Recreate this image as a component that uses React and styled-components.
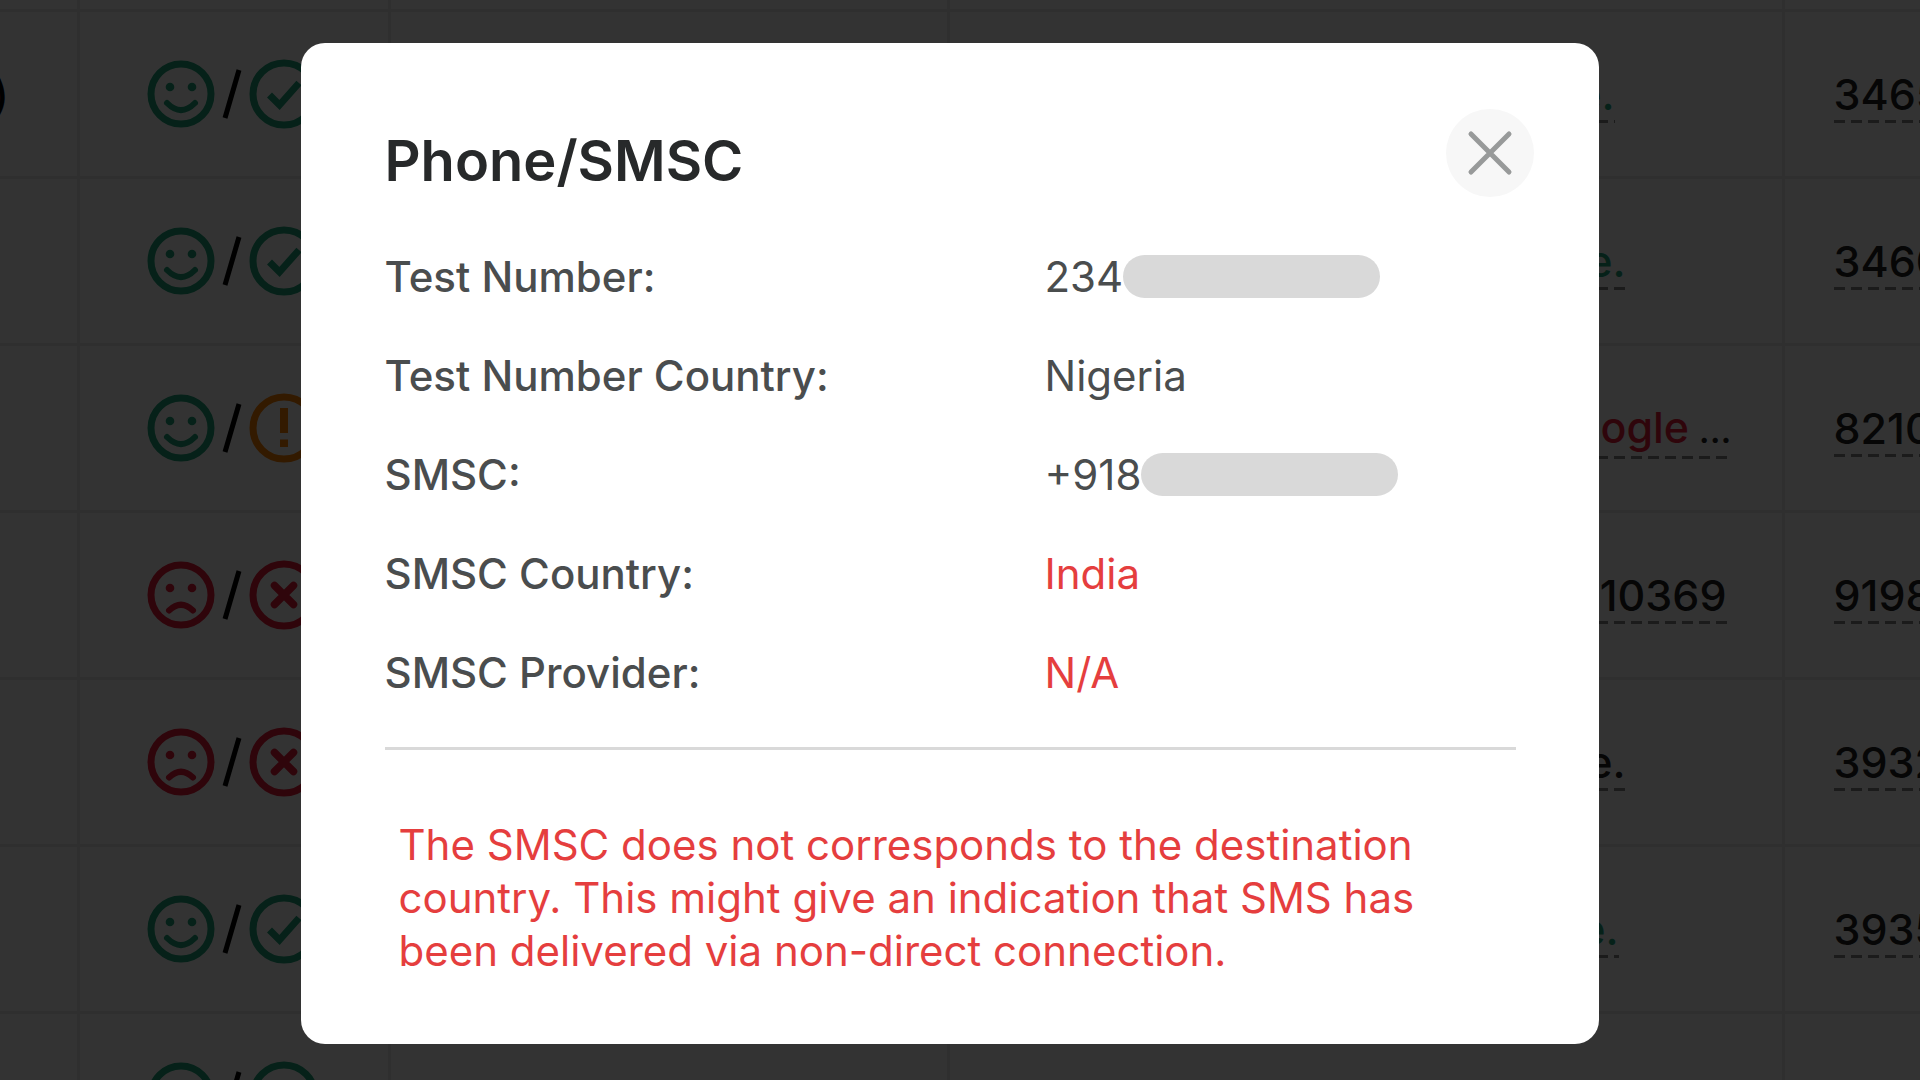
import React from "react";
import styled, { createGlobalStyle } from "styled-components";

const GlobalStyle = createGlobalStyle`
  * { box-sizing: border-box; }
  body {
    margin: 0;
    overflow: hidden;
    background: #fff;
    font-family: Inter, "Liberation Sans", sans-serif;
  }
`;

const Page = styled.main`
  height: 100vh;
  overflow: hidden;
`;

const Table = styled.table`
  width: 110%;
  table-layout: fixed;
  border-collapse: collapse;
  font-size: 43px;
  font-weight: 500;
  color: #222;
`;

const Column = styled.col`
  width: ${(p) => p.$width || "auto"};
`;

const HeadRow = styled.tr`
  height: 10px;
`;

const Row = styled.tr`
  height: 167px;
`;

const Cell = styled.td`
  padding: 0 0 0 ${(p) => p.$indent || 0}px;
  border: 3px solid #e9e9e9;
  border-width: 0 3px 3px 0;
  white-space: nowrap;
`;

const Status = styled.div`
  display: flex;
  align-items: center;
  gap: 7px;
`;

const Tail = styled.div`
  margin-left: -7px;
  line-height: 46px;
  color: #000;
`;

const Note = styled.a`
  display: block;
  width: ${(p) => p.$width || "100%"};
  margin-top: 7px;
  padding-bottom: 6px;
  line-height: 46px;
  text-align: ${(p) => (p.$width ? "right" : "left")};
  text-decoration: none;
  color: ${(p) => p.$color || "#222"};
  background: repeating-linear-gradient(to right, #888 0 11px, transparent 11px 17px) left
    bottom / 100% 3px no-repeat;
`;

const Rest = styled.span`
  font-size: 36px;
  color: #222;
`;

const Overlay = styled.div`
  position: fixed;
  inset: 0;
  display: flex;
  justify-content: center;
  align-items: flex-start;
  padding: 43px 21px 0 0;
  background: rgba(0, 0, 0, 0.8);
`;

const Dialog = styled.section`
  width: 100%;
  max-width: 1298px;
  padding: 66px 65px 67px 84px;
  border-radius: 24px;
  background: #fff;
  color: #4a4d4e;
`;

const Header = styled.header`
  display: flex;
  justify-content: space-between;
  align-items: center;
`;

const Title = styled.h1`
  margin: 0;
  padding-top: 16px;
  font-size: 56px;
  font-weight: 600;
  line-height: 72px;
  color: #27292a;
`;

const CloseButton = styled.button`
  display: grid;
  place-items: center;
  width: 88px;
  height: 88px;
  padding: 0;
  border: 0;
  border-radius: 50%;
  background: #f7f7f7;
  color: #989a9a;
`;

const Details = styled.dl`
  margin: 30px 18px 0 0;
  padding-bottom: 25px;
  border-bottom: 3px solid #d9d9d9;
  font-size: 42px;
`;

const Detail = styled.div`
  display: grid;
  grid-template-columns: 660px 1fr;
  align-items: center;
  height: 99px;
`;

const Term = styled.dt`
  font-weight: 500;
`;

const Value = styled.dd`
  display: flex;
  align-items: center;
  margin: 0;
  color: ${(p) => (p.$alert ? "#e53e3e" : "inherit")};
`;

const Redacted = styled.span`
  width: 257px;
  height: 43px;
  border-radius: 22px;
  background: #d9d9d9;
`;

const Warning = styled.p`
  margin: 68px 18px 0 0;
  padding: 0 90px 0 14px;
  font-size: 42px;
  line-height: 53px;
  color: #e53e3e;
`;

const GREEN = "#1fa67c";
const RED = "#e81c38";
const ORANGE = "#ff8000";

function Face({ sad }) {
  const color = sad ? RED : GREEN;
  return (
    <svg width="68" height="68" viewBox="0 0 68 68" fill="none" stroke={color}>
      <circle cx="34" cy="34" r="30" strokeWidth="7" />
      <circle cx="23" cy="27" r="4.3" fill={color} stroke="none" />
      <circle cx="45" cy="27" r="4.3" fill={color} stroke="none" />
      {sad ? (
        <path d="M22 49.5Q34 38 46 49.5" strokeWidth="6" strokeLinecap="round" />
      ) : (
        <path d="M20 43Q34 57 48 43" strokeWidth="6" strokeLinecap="round" />
      )}
    </svg>
  );
}

function Badge({ kind }) {
  const color = { ok: GREEN, warn: ORANGE, fail: RED }[kind];
  return (
    <svg width="70" height="70" viewBox="0 0 70 70" fill="none" stroke={color} strokeWidth="7">
      <circle cx="35" cy="35" r="31" />
      {kind === "ok" && <path d="M20.5 36L30.5 46L50 24" strokeWidth="7" />}
      {kind === "warn" && <path d="M35 15V40M35 46.5V54" strokeWidth="8" />}
      {kind === "fail" && (
        <path d="M25.5 25.5L44.5 44.5M44.5 25.5L25.5 44.5" strokeWidth="7.5" strokeLinecap="round" />
      )}
    </svg>
  );
}

function Slash() {
  return (
    <svg width="20" height="52" viewBox="0 0 20 52" stroke="#000" strokeWidth="5">
      <path d="M17 2L3 50" />
    </svg>
  );
}

const rows = [
  { tail: ")", badge: "ok", note: "e.", color: GREEN, width: "613px", id: "3465" },
  { badge: "ok", note: "e.", color: GREEN, width: "624px", id: "3460" },
  { badge: "warn", note: "ogle", rest: " ...", color: RED, width: "730px", id: "8210" },
  { sad: true, badge: "fail", note: "10369", width: "725px", id: "9198" },
  { sad: true, badge: "fail", note: "e.", width: "624px", id: "3932" },
  { badge: "ok", note: "e.", color: GREEN, width: "617px", id: "3935" },
  { badge: "ok" },
];

const details = [
  { term: "Test Number:", value: "234", redacted: true },
  { term: "Test Number Country:", value: "Nigeria" },
  { term: "SMSC:", value: "+918", redacted: true },
  { term: "SMSC Country:", value: "India", alert: true },
  { term: "SMSC Provider:", value: "N/A", alert: true },
];

export default function App() {
  return (
    <>
      <GlobalStyle />
      <Page>
        <Table>
          <colgroup>
            <Column $width="78px" />
            <Column $width="311px" />
            <Column $width="559px" />
            <Column $width="835px" />
            <Column />
          </colgroup>
          <tbody>
            <HeadRow>
              <Cell />
              <Cell />
              <Cell />
              <Cell />
              <Cell />
            </HeadRow>
            {rows.map((r, i) => (
              <Row key={i}>
                <Cell>{r.tail && <Tail>{r.tail}</Tail>}</Cell>
                <Cell $indent={67}>
                  <Status>
                    <Face sad={r.sad} />
                    <Slash />
                    <Badge kind={r.badge} />
                  </Status>
                </Cell>
                <Cell />
                <Cell $indent={52}>
                  {r.note && (
                    <Note href="#" $color={r.color} $width={r.width}>
                      {r.note}
                      {r.rest && <Rest>{r.rest}</Rest>}
                    </Note>
                  )}
                </Cell>
                <Cell $indent={49}>{r.id && <Note href="#">{r.id}</Note>}</Cell>
              </Row>
            ))}
          </tbody>
        </Table>
      </Page>
      <Overlay>
        <Dialog role="dialog" aria-modal="true" aria-labelledby="dialog-title">
          <Header>
            <Title id="dialog-title">Phone/SMSC</Title>
            <CloseButton type="button" aria-label="Close">
              <svg
                width="48"
                height="48"
                viewBox="0 0 48 48"
                stroke="currentColor"
                strokeWidth="5"
                strokeLinecap="round"
              >
                <path d="M5 5L43 43M43 5L5 43" />
              </svg>
            </CloseButton>
          </Header>
          <Details>
            {details.map((d) => (
              <Detail key={d.term}>
                <Term>{d.term}</Term>
                <Value $alert={d.alert}>
                  {d.value}
                  {d.redacted && <Redacted />}
                </Value>
              </Detail>
            ))}
          </Details>
          <Warning>
            The SMSC does not corresponds to the destination country. This might give an indication
            that SMS has been delivered via non-direct connection.
          </Warning>
        </Dialog>
      </Overlay>
    </>
  );
}
